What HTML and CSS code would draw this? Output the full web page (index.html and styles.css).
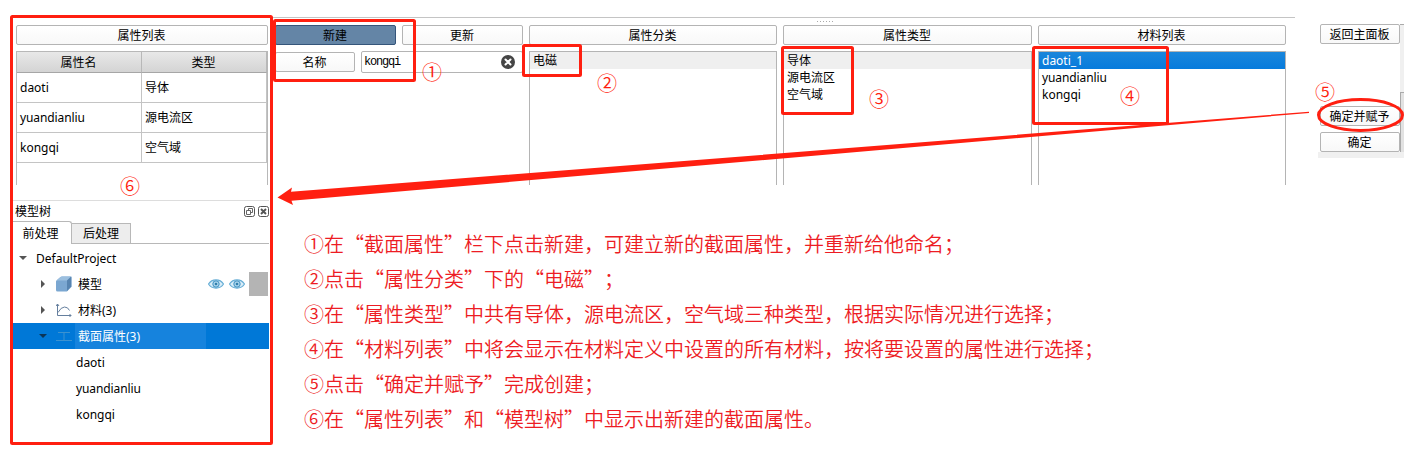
FILE: index.html
```html
<!DOCTYPE html>
<html lang="zh-CN">
<head>
<meta charset="utf-8">
<title>截面属性</title>
<link rel="stylesheet" href="styles.css">
</head>
<body>
<div class="page">
  <div class="top">
    <section class="panel props">
      <div class="btn">属性列表</div>
      <div class="table">
        <div class="th">属性名</div><div class="th">类型</div>
        <div class="td">daoti</div><div class="td">导体</div>
        <div class="td latin">yuandianliu</div><div class="td">源电流区</div>
        <div class="td">kongqi</div><div class="td">空气域</div>
      </div>
    </section>
    <div class="editor">
      <section class="panel create">
        <div class="row"><div class="btn active">新建</div><div class="btn">更新</div></div>
        <div class="row">
          <div class="btn name">名称</div>
          <div class="input"><span>kongqi</span>
            <svg class="clear" viewBox="0 0 14 14"><circle cx="7" cy="7" r="7" fill="#454545"/><path d="M4.500 4.500l5 5M9.500 4.500l-5 5" stroke="#fff" stroke-width="2" stroke-linecap="round"/></svg>
          </div>
        </div>
      </section>
      <section class="panel">
        <div class="btn">属性分类</div>
        <div class="list"><div class="item hover">电磁</div></div>
      </section>
      <section class="panel types">
        <div class="btn">属性类型</div>
        <div class="list"><div class="item hover">导体</div><div class="item">源电流区</div><div class="item">空气域</div></div>
      </section>
      <section class="panel">
        <div class="btn">材料列表</div>
        <div class="list"><div class="item selected">daoti_1</div><div class="item latin">yuandianliu</div><div class="item">kongqi</div></div>
      </section>
    </div>
    <div class="actions">
      <div class="stack">
        <div class="btn back">返回主面板</div>
        <div class="btn">确定并赋予</div>
        <div class="btn">确定</div>
      </div>
      <div class="scroll"><div class="thumb"></div></div>
    </div>
  </div>

  <div class="bottom">
    <section class="tree">
      <div class="title"><span>模型树</span>
        <svg class="winbtns" viewBox="0 0 26 12" fill="none" stroke="#555">
          <rect x="1.500" y="1.500" width="10" height="10" rx="2"/><path d="M5.500 5V3.500h4v4H8M3.500 5.500h4v4h-4z" stroke-width=".9"/>
          <rect x="15.500" y="1.500" width="10" height="10" rx="2"/><path d="M18 4l5 5M23 4l-5 5" stroke-width="1.900"/>
        </svg>
      </div>
      <div class="tabs"><div class="tab on">前处理</div><div class="tab">后处理</div><div class="rest"></div></div>
      <div class="node root"><svg class="arrow" viewBox="0 0 8 8"><path d="M0 2h8L4 6z" fill="#555"/></svg><span>DefaultProject</span></div>
      <div class="node">
        <svg class="arrow" viewBox="0 0 8 8"><path d="M2 0v8l4-4z" fill="#555"/></svg>
        <svg class="icon" viewBox="0 0 16 16"><path d="M0 5.500Q0 4.500 1 4L4.500 1Q5 .5 6 .5h8.500q1 0 1 1v8.500q0 1-.6 1.600L11.500 15q-.6.600-1.500.600H1.500Q0 15.600 0 14z" fill="#7ba7d1"/><path d="M.5 4.500L4.500 1Q5 .5 6 .5h9L11 4.500z" fill="#9bbfdf"/><path d="M11 4.500l4.300-4v9.700L11 15z" fill="#5784b0"/></svg>
        <span class="label">模型</span>
        <svg class="eye" viewBox="0 0 16 10"><path d="M.5 5C4-.5 12-.5 15.500 5 12 10.500 4 10.500.5 5z" fill="#d9edf8" stroke="#65add5" stroke-width="1.200"/><circle cx="8" cy="5" r="3.200" fill="#a9d4eb" stroke="#3f91c3"/><circle cx="8" cy="5" r="1.300" fill="#327fac"/></svg>
        <svg class="eye" viewBox="0 0 16 10"><path d="M.5 5C4-.5 12-.5 15.500 5 12 10.500 4 10.500.5 5z" fill="#d9edf8" stroke="#65add5" stroke-width="1.200"/><circle cx="8" cy="5" r="3.200" fill="#a9d4eb" stroke="#3f91c3"/><circle cx="8" cy="5" r="1.300" fill="#327fac"/></svg>
        <div class="swatch"></div>
      </div>
      <div class="node">
        <svg class="arrow" viewBox="0 0 8 8"><path d="M2 0v8l4-4z" fill="#555"/></svg>
        <svg class="icon" viewBox="0 0 16 16" fill="none" stroke="#657f9e"><path d="M1.500 2v11.500H15M0 4l1.500-2L3 4M13.500 12l1.500 1.500-1.500 1.500M2 10.500Q5 5 8.500 5T13.500 8.500"/></svg>
        <span class="label">材料(3)</span>
      </div>
      <div class="node sel">
        <svg class="arrow" viewBox="0 0 8 8"><path d="M0 2h8L4 6z" fill="#0b3558"/></svg>
        <svg class="icon" viewBox="0 0 16 16" fill="none" stroke="#3c92d0"><path d="M2 4.500h12M0 12.500h16M8 4.500v8"/></svg>
        <span class="label">截面属性(3)</span>
      </div>
      <div class="node leaf">daoti</div>
      <div class="node leaf latin">yuandianliu</div>
      <div class="node leaf">kongqi</div>
    </section>
    <div class="steps">
      <p>①在“截面属性”栏下点击新建，可建立新的截面属性，并重新给他命名；</p>
      <p>②点击“属性分类”下的“电磁”；</p>
      <p>③在“属性类型”中共有导体，源电流区，空气域三种类型，根据实际情况进行选择；</p>
      <p>④在“材料列表”中将会显示在材料定义中设置的所有材料，按将要设置的属性进行选择；</p>
      <p>⑤点击“确定并赋予”完成创建；</p>
      <p>⑥在“属性列表”和“模型树”中显示出新建的截面属性。</p>
    </div>
  </div>

  <svg class="marks" viewBox="0 0 1413 455">
    <path class="grip" d="M817 21.500h17"/>
    <g class="frames">
      <rect x="11.500" y="16.500" width="260" height="427" rx="1"/>
      <rect x="274.500" y="20.500" width="140" height="60" rx="1"/>
      <rect x="523.500" y="45.500" width="57" height="30" rx="1"/>
      <rect x="782.500" y="47.500" width="70" height="66" rx="1"/>
      <rect x="1033.500" y="47.500" width="134" height="76" rx="1"/>
      <ellipse cx="1360.500" cy="115" rx="42" ry="15.500"/>
    </g>
    <path d="M277.500 197.500L292 187.500 291 191.800 1309 111.800 1309 113 291.500 200.800 293 205z" fill="#ff1f10"/>
  </svg>
  <span class="num n1">①</span><span class="num n2">②</span><span class="num n3">③</span>
  <span class="num n4">④</span><span class="num n5">⑤</span><span class="num n6">⑥</span>
</div>
</body>
</html>
```
FILE: styles.css
```css
* { box-sizing: border-box; }
body { margin: 0; background: #fff; }
.page {
  position: relative; width: 1413px; height: 455px; overflow: hidden;
  font: 12px/17px "Noto Sans", "Noto Sans CJK SC", sans-serif; color: #000;
}
.top { display: flex; height: 200px; }
.panel { display: flex; flex-direction: column; gap: 6px; height: 160px; }
.props { width: 252px; margin: 25px 0 0 16px; }
.btn {
  flex: none; height: 20px; border: 1px solid #b4b4b4; border-radius: 2px;
  background: linear-gradient(#fff, #f8f8f8); padding-right: 1px;
  display: flex; align-items: center; justify-content: center;
}
.btn.active { background: #6485a6; border-color: #35557a; }
.table {
  flex: 1; display: grid; grid-template-columns: 125px 125px; grid-template-rows: 21px 30px 30px 30px;
  border: 1px solid #b8b8b8; border-bottom: 0;
}
.th {
  display: flex; align-items: center; justify-content: center;
  background: linear-gradient(#e8e8e8, #d4d4d4); padding-right: 1px;
  border-right: 1px solid #b8b8b8; border-bottom: 1px solid #a6a6a6;
}
.td { display: flex; align-items: center; padding-left: 3px; border-right: 1px solid #c4c4c4; border-bottom: 1px solid #c4c4c4; }
.latin { letter-spacing: -.1px; }
.editor {
  display: grid; grid-template-columns: 248px 248px 249px 248px; column-gap: 6px;
  width: 1025px; margin: 17px 0 0 2px; padding: 7px 0 0 5px; border-top: 1px solid #c4c4c4; align-items: start;
}
.row { display: flex; gap: 6px; align-items: center; height: 20px; }
.row .btn { flex: 1; }
.row + .row { height: 22px; }
.row .name { flex: none; width: 80px; }
.input {
  flex: 1; height: 22px; display: flex; align-items: center; justify-content: space-between;
  padding: 0 7px 0 2px; border: 1px solid #b4b4b4; border-radius: 2px;
}
.input span { font: 12px "Liberation Mono", monospace; letter-spacing: -1.200px; }
.clear { width: 14px; height: 14px; }
.list { flex: 1; border: 1px solid #b4b4b4; border-bottom: 0; }
.item { height: 17px; line-height: 17px; padding-left: 3px; }
.item.hover { background: #efefef; }
.item.selected { background: linear-gradient(#1a86db, #077bdc); color: #fff; }
.actions { display: flex; width: 86px; height: 134px; margin: 24px 0 0 23px; border-bottom: 6px solid #f0f0f0; }
.stack { width: 82px; padding-left: 2px; display: flex; flex-direction: column; gap: 6px; }
.back { margin-bottom: 56px; }
.scroll { width: 4px; padding-top: 67px; background: #f0f0f0; border-top: 1px solid #aaa; }
.thumb { height: 60px; background: #e2e2e2; border: solid #aaa; border-width: 1px 0 0 1px; }

.bottom { display: flex; height: 255px; }
.tree { width: 256px; margin-left: 13px; border-top: 1px solid #ddd; }
.title { display: flex; justify-content: space-between; align-items: center; height: 20px; padding-left: 2px; }
.winbtns { width: 26px; height: 12px; }
.tabs { display: flex; height: 23px; }
.tab { width: 59px; border: 1px solid #b8b8b8; border-left: 0; background: #ededed; display: flex; align-items: center; justify-content: center; margin-top: 2px; }
.tab.on { margin-top: 0; background: #fff; border-bottom: 0; border-radius: 0 3px 0 0; padding-right: 3px; }
.rest { flex: 1; border-bottom: 1px solid #b8b8b8; }
.node { display: flex; align-items: center; height: 26px; padding-left: 26px; }
.root { height: 27px; padding: 1px 0 0 6px; gap: 9px; }
.arrow { width: 8px; height: 8px; }
.icon { width: 16px; height: 16px; margin-left: 9px; }
.label { padding-left: 6px; margin-right: auto; }
.eye { width: 16px; height: 10px; margin-right: 5px; }
.eye + .swatch { margin-left: -1px; }
.swatch { width: 19px; height: 24px; background: #b4b4b4; margin-right: 1px; }
.sel { background: #0078d7; color: #fff; }
.sel .label { width: 131px; height: 26px; line-height: 27px; padding-left: 3px; margin-left: 3px; background: #1683dd; }
.leaf { padding-left: 63px; }
.steps {
  margin: 26px 0 0 35px; color: #ed1c24; white-space: nowrap;
  font: 350 20px/35px "Noto Sans CJK SC", sans-serif; text-spacing-trim: space-all;
}
.steps p { margin: 0; height: 35px; }
.marks { position: absolute; left: 0; top: 0; width: 1413px; height: 455px; }
.frames { fill: none; stroke: #ff1f10; stroke-width: 3; }
.grip { stroke: #aaa; stroke-dasharray: 1 2; }
.num { position: absolute; width: 20px; height: 20px; font: 350 20px/20px "Noto Sans CJK SC", sans-serif; color: #ff1f10; }
.n1 { left: 422px; top: 62px; }
.n2 { left: 597px; top: 73px; }
.n3 { left: 869px; top: 89px; }
.n4 { left: 1120px; top: 86px; }
.n5 { left: 1315px; top: 82px; }
.n6 { left: 120px; top: 176px; }
```
